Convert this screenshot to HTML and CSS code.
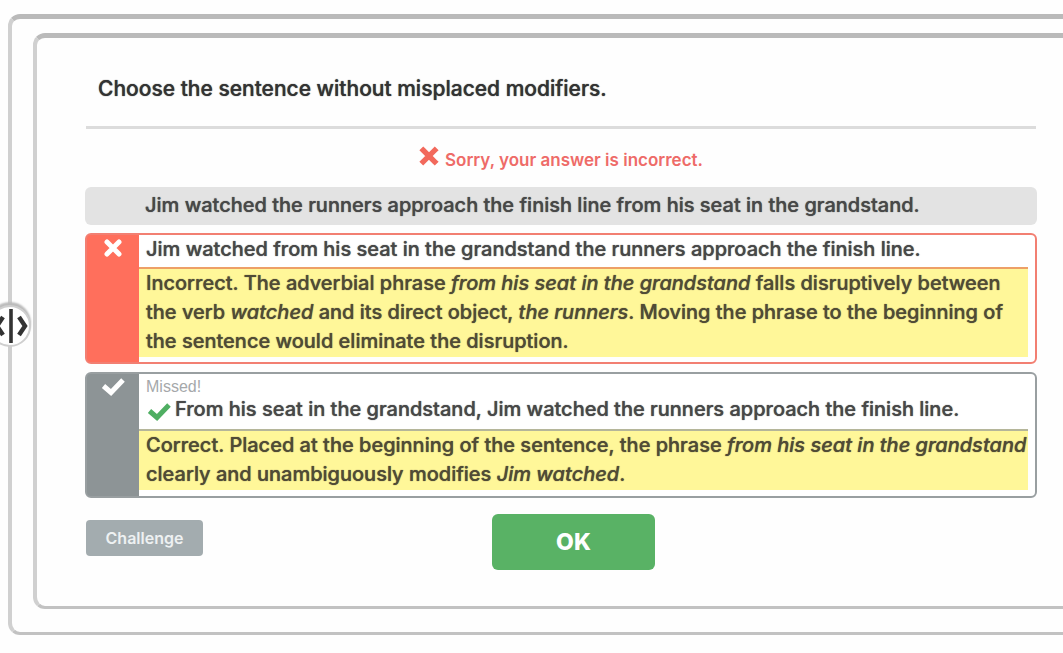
FILE: index.html
```html
<!DOCTYPE html>
<html lang="en">
<head>
<meta charset="utf-8">
<title>Misplaced modifiers</title>
<link rel="stylesheet" href="styles.css">
</head>
<body>
<main class="frame">
  <button class="handle" type="button" aria-label="Resize panel">
    <svg viewBox="0 0 42 42" width="42" height="42" fill="none" stroke="#333">
      <path d="M22 4v34" stroke-width="3.600"/>
      <path d="M14 12l-6 9 6 9M30 12l6 9-6 9" stroke-width="4.400"/>
    </svg>
  </button>
  <section class="panel">
    <h1 class="question">Choose the sentence without misplaced modifiers.</h1>
    <p class="result">
      <svg class="result-icon" viewBox="0 0 20 20" width="20" height="20" fill="none" stroke="#f2695c" stroke-width="5.4" stroke-linecap="square"><path d="M4.2 4.2l11.6 11.6M15.800 4.200L4.200 15.800"/></svg>
      <span>Sorry, your answer is incorrect.</span>
    </p>
    <div class="choices">
      <article class="choice plain">
        <p class="sentence">Jim watched the runners approach the finish line from his seat in the grandstand.</p>
      </article>
      <article class="choice wrong">
        <div class="mark">
          <svg viewBox="0 0 18 18" width="18" height="18" fill="none" stroke="#fff" stroke-width="5" stroke-linecap="round"><path d="M3 3l12 12M15 3L3 15"/></svg>
        </div>
        <div class="body">
          <p class="sentence">Jim watched from his seat in the grandstand the runners approach the finish line.</p>
          <p class="note">Incorrect. The adverbial phrase <em>from his seat in the grandstand</em> falls disruptively between the verb <em>watched</em> and its direct object, <em>the runners</em>. Moving the phrase to the beginning of the sentence would eliminate the disruption.</p>
        </div>
      </article>
      <article class="choice missed">
        <div class="mark">
          <svg viewBox="0 0 24 18" width="24" height="18" fill="none" stroke="#fff" stroke-width="5"><path d="M2.500 8l7.500 6.500L22 2"/></svg>
        </div>
        <div class="body">
          <p class="tag">Missed!</p>
          <p class="sentence with-tick">
            <svg class="tick" viewBox="0 0 24 18" width="24" height="18" fill="none" stroke="#4fae62" stroke-width="5"><path d="M2.500 8l7.500 6.500L22 2"/></svg>
            <span>From his seat in the grandstand, Jim watched the runners approach the finish line.</span>
          </p>
          <p class="note">Correct. Placed at the beginning of the sentence, the phrase <em>from his seat in the grandstand</em> clearly and unambiguously modifies <em>Jim watched</em>.</p>
        </div>
      </article>
    </div>
    <footer class="actions">
      <button class="challenge" type="button">Challenge</button>
      <button class="ok" type="button">OK</button>
    </footer>
  </section>
</main>
</body>
</html>
```
FILE: styles.css
```css
* { box-sizing: border-box; }
body {
  margin: 0;
  padding-top: 14px;
  background: #fefefe;
  color: #484848;
  font-family: Inter, "Liberation Sans", sans-serif;
  font-size: 20px;
  font-weight: 540;
  line-height: 29px;
  overflow-x: hidden;
}
p, h1 { margin: 0; }
.question, .sentence, .note { text-shadow: 0 0 1px currentColor; }
.frame {
  position: relative;
  margin-left: 8px;
  padding: 14px 0 23px 21px;
  border: solid #d0d0d0;
  border-width: 5px 0 3px 4px;
  border-top-color: #bababa;
  border-bottom-color: #c2c2c2;
  border-radius: 12px 0 0 12px;
}
.panel {
  padding: 36px 26px 36px 48px;
  border: solid #d0d0d0;
  border-width: 5px 0 3px 4px;
  border-top-color: #bababa;
  border-bottom-color: #c2c2c2;
  border-radius: 12px 0 0 12px;
}
.question {
  margin: 0 1px;
  padding: 0 12px 23px;
  border-bottom: 3px solid #dcdcdc;
  color: #333;
  font-size: 21px;
  font-weight: 540;
  line-height: 29px;
}
.result {
  display: flex;
  justify-content: center;
  gap: 6px;
  padding: 17px 0 12px;
  color: #ee6b68;
  font-size: 17px;
  font-weight: 600;
}
.choices {
  display: grid;
  gap: 8px;
}
.choice {
  display: flex;
  border-radius: 6px;
}
.plain {
  padding: 4px 0 5px 60px;
  background: #e3e3e3;
}
.wrong { border: 2px solid #f27f72; background: #ff6f5c; }
.missed { border: 2px solid #999fa1; background: #8d9496; }
.mark {
  flex: 0 0 52px;
  display: flex;
  justify-content: center;
  align-items: flex-start;
  padding-top: 4px;
}
.body {
  flex: 1;
  padding: 0 7px 5px 0;
  border-radius: 0 4px 4px 0;
  background: #fff;
}
.body .sentence { padding: 0 7px 3px; }
.body .with-tick {
  display: flex;
  align-items: center;
  gap: 4px;
  padding: 0 0 5px 8px;
}
.tick { margin-top: 4px; }
.note {
  padding: 0 0 1px 7px;
  border-top: 2px solid #eda067;
  background: #fff799;
  color: #504b36;
}
.missed .body { padding-bottom: 6px; }
.missed .note { border-top-color: #b5b69a; }
.tag {
  padding: 5px 7px 0;
  color: #a5a8aa;
  font-family: "Liberation Sans", sans-serif;
  font-size: 16px;
  font-weight: 400;
  line-height: 16px;
}
.actions {
  display: grid;
  grid-template-columns: 1fr auto 1fr;
  align-items: start;
  padding: 16px 0 0 25px;
}
button { font-family: inherit; border: 0; }
.challenge {
  justify-self: start;
  margin: 6px 0 0 -24px;
  width: 117px;
  height: 36px;
  border-radius: 4px;
  background: #a3acaf;
  color: #eef1f2;
  font-size: 16px;
  font-weight: 600;
}
.ok {
  grid-column: 2;
  width: 163px;
  height: 56px;
  border-radius: 6px;
  background: #59b265;
  color: #fff;
  font-size: 23px;
  font-weight: 800;
}
.handle {
  position: absolute;
  top: 286px;
  left: -23px;
  width: 42px;
  height: 42px;
  padding: 0;
  border: 2px solid #cfcfcf;
  border-radius: 50%;
  background: #fff;
  box-shadow: 0 -3px 2px #bbb;
}
.handle svg { display: block; margin: -2px; }
```
